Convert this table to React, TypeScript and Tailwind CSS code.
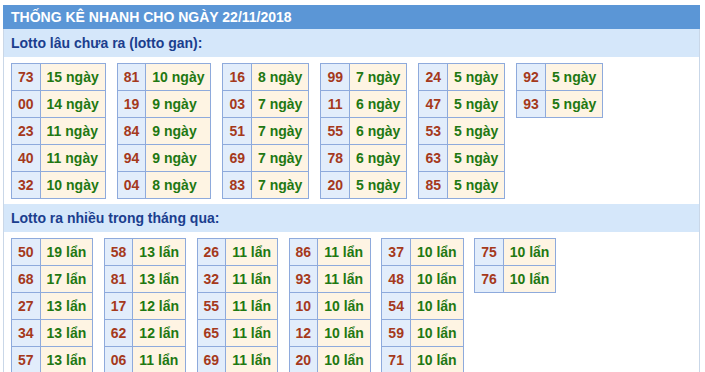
import React from "react";

const gan: [string, string][][] = [
  [["73", "15"], ["00", "14"], ["23", "11"], ["40", "11"], ["32", "10"]],
  [["81", "10"], ["19", "9"], ["84", "9"], ["94", "9"], ["04", "8"]],
  [["16", "8"], ["03", "7"], ["51", "7"], ["69", "7"], ["83", "7"]],
  [["99", "7"], ["11", "6"], ["55", "6"], ["78", "6"], ["20", "5"]],
  [["24", "5"], ["47", "5"], ["53", "5"], ["63", "5"], ["85", "5"]],
  [["92", "5"], ["93", "5"]],
];

const nhieu: [string, string][][] = [
  [["50", "19"], ["68", "17"], ["27", "13"], ["34", "13"], ["57", "13"]],
  [["58", "13"], ["81", "13"], ["17", "12"], ["62", "12"], ["06", "11"]],
  [["26", "11"], ["32", "11"], ["55", "11"], ["65", "11"], ["69", "11"]],
  [["86", "11"], ["93", "11"], ["10", "10"], ["12", "10"], ["20", "10"]],
  [["37", "10"], ["48", "10"], ["54", "10"], ["59", "10"], ["71", "10"]],
  [["75", "10"], ["76", "10"]],
];

function Block({ rows, unit }: { rows: [string, string][]; unit: string }) {
  return (
    <table className="border-collapse border border-[#8eaadc]">
      <tbody>
        {rows.map(([n, v]) => (
          <tr key={n} className="h-[27px]">
            <td className="border border-[#8eaadc] bg-[#e2edfb] px-[6px] py-0 text-center text-[#a5391c]">
              {n}
            </td>
            <td className="border border-[#8eaadc] bg-[#fef4e3] px-[6px] py-0 text-left text-[#1f7812] whitespace-nowrap">
              {v} {unit}
            </td>
          </tr>
        ))}
      </tbody>
    </table>
  );
}

function Section({
  title,
  data,
  unit,
  gap,
}: {
  title: string;
  data: [string, string][][];
  unit: string;
  gap: string;
}) {
  return (
    <>
      <div className="h-[28px] bg-[#d5e7fa] pl-[7px] flex items-center text-[14px] font-bold text-[#1b3e8e]">
        {title}
      </div>
      <div className={`flex items-start ${gap} pl-[7px] pt-[6px] pb-[5px]`}>
        {data.map((rows, i) => (
          <Block key={i} rows={rows} unit={unit} />
        ))}
      </div>
    </>
  );
}

export default function App() {
  return (
    <div
      className="bg-white w-[705px] h-[372px] overflow-hidden pt-[5px] pl-[3px]"
      style={{ fontFamily: '"Liberation Sans", Arial, sans-serif' }}
    >
      <div className="w-[697px] border-x border-[#c9d7e8] text-[14px] font-bold">
        <div className="h-[24px] bg-[#5b96d6] -mx-px pl-[8px] flex items-center text-white text-[14px] font-bold">
          THỐNG KÊ NHANH CHO NGÀY 22/11/2018
        </div>
        <Section title="Lotto lâu chưa ra (lotto gan):" data={gan} unit="ngày" gap="gap-[11px]" />
        <Section title="Lotto ra nhiều trong tháng qua:" data={nhieu} unit="lẩn" gap="gap-[10.5px]" />
      </div>
    </div>
  );
}
